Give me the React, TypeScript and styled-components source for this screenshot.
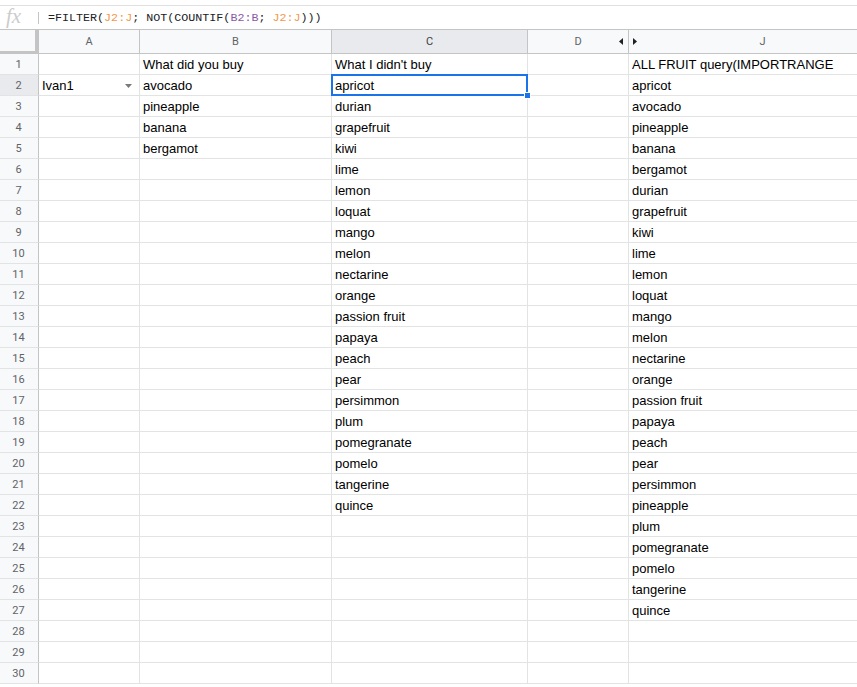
import React from "react";
import styled, { createGlobalStyle } from "styled-components";

const GlobalStyle = createGlobalStyle`
  html, body {
    margin: 0;
    padding: 0;
    background: #ffffff;
    overflow: hidden;
  }
  * {
    box-sizing: border-box;
  }
`;

const COLS = "39px 101px 192px 196px 101px 268px";

const colA: Record<number, string> = { 2: "Ivan1" };
const colB = ["What did you buy", "avocado", "pineapple", "banana", "bergamot"];
const colC = [
  "What I didn't buy", "apricot", "durian", "grapefruit", "kiwi", "lime", "lemon",
  "loquat", "mango", "melon", "nectarine", "orange", "passion fruit", "papaya",
  "peach", "pear", "persimmon", "plum", "pomegranate", "pomelo", "tangerine", "quince",
];
const colJ = [
  "ALL FRUIT query(IMPORTRANGE", "apricot", "avocado", "pineapple", "banana", "bergamot",
  "durian", "grapefruit", "kiwi", "lime", "lemon", "loquat", "mango", "melon",
  "nectarine", "orange", "passion fruit", "papaya", "peach", "pear", "persimmon",
  "pineapple", "plum", "pomegranate", "pomelo", "tangerine", "quince",
];

const ROW_COUNT = 30;

export default function App() {
  const rows = Array.from({ length: ROW_COUNT }, (_, i) => i + 1);

  return (
    <>
      <GlobalStyle />
      <Page>
        <FormulaBar>
          <FxLabel>fx</FxLabel>
          <Divider />
          <FormulaText>
            =FILTER(<Ref $color="#f19a4d">J2:J</Ref>; NOT(COUNTIF(
            <Ref $color="#8a5aa6">B2:B</Ref>; <Ref $color="#f19a4d">J2:J</Ref>)))
          </FormulaText>
        </FormulaBar>

        <Sheet>
          <HeaderRow>
            <Corner />
            <ColHeader>A</ColHeader>
            <ColHeader>B</ColHeader>
            <ColHeader $selected>C</ColHeader>
            <ColHeader>
              D
              <HiddenArrow $side="left">
                <svg width="4" height="7" viewBox="0 0 4 7">
                  <path d="M4 0 L0 3.5 L4 7 Z" fill="#202124" />
                </svg>
              </HiddenArrow>
            </ColHeader>
            <ColHeader>
              <HiddenArrow $side="right">
                <svg width="4" height="7" viewBox="0 0 4 7">
                  <path d="M0 0 L4 3.5 L0 7 Z" fill="#202124" />
                </svg>
              </HiddenArrow>
              J
            </ColHeader>
          </HeaderRow>

          {rows.map((r) => (
            <Row key={r}>
              <RowHeader $selected={r === 2}>{r}</RowHeader>
              <Cell>
                {colA[r]}
                {r === 2 && (
                  <DropArrow>
                    <svg width="7" height="4" viewBox="0 0 7 4">
                      <path d="M0 0 L7 0 L3.5 4 Z" fill="#7a7a7a" />
                    </svg>
                  </DropArrow>
                )}
              </Cell>
              <Cell>{colB[r - 1]}</Cell>
              <Cell>
                {colC[r - 1]}
                {r === 2 && (
                  <Selection>
                    <FillHandle />
                  </Selection>
                )}
              </Cell>
              <Cell />
              <Cell>{colJ[r - 1]}</Cell>
            </Row>
          ))}
        </Sheet>
      </Page>
    </>
  );
}

const Page = styled.div`
  width: 857px;
  height: 687px;
  overflow: hidden;
  background: #ffffff;
  font-family: "Liberation Sans", Arial, sans-serif;
`;

const FormulaBar = styled.div`
  margin-top: 5px;
  height: 25px;
  border-top: 1px solid #e0e0e0;
  border-bottom: 1px solid #c4c4c4;
  display: flex;
  align-items: center;
`;

const FxLabel = styled.span`
  width: 38px;
  padding-left: 6px;
  font-family: "Liberation Serif", "Times New Roman", serif;
  font-style: italic;
  font-size: 21px;
  color: #cccccc;
  line-height: 1;
  margin-top: -3px;
`;

const Divider = styled.div`
  width: 1px;
  height: 12px;
  background: #c4c4c4;
`;

const FormulaText = styled.div`
  padding-left: 9px;
  font-family: "Liberation Mono", "Courier New", monospace;
  font-size: 11.7px;
  color: #202124;
  white-space: pre;
`;

const Ref = styled.span<{ $color: string }>`
  color: ${(p) => p.$color};
`;

const Sheet = styled.div`
  display: flex;
  flex-direction: column;
`;

const HeaderRow = styled.div`
  display: grid;
  grid-template-columns: ${COLS};
  height: 24px;
  border-bottom: 1px solid #c4c4c4;
  background: #f8f9fa;
`;

const Corner = styled.div`
  background: #f8f9fa;
  border-right: 4px solid #c4c4c4;
  border-bottom: 3px solid #c4c4c4;
  margin-bottom: -1px;
`;

const ColHeader = styled.div<{ $selected?: boolean }>`
  position: relative;
  display: flex;
  align-items: center;
  justify-content: center;
  border-right: 1px solid #c4c4c4;
  background: ${(p) => (p.$selected ? "#e8eaed" : "#f8f9fa")};
  color: ${(p) => (p.$selected ? "#3c4043" : "#5f6368")};
  font-family: Roboto, "Liberation Sans", Arial, sans-serif;
  font-size: 11px;
`;

const HiddenArrow = styled.span<{ $side: "left" | "right" }>`
  position: absolute;
  top: 8px;
  display: flex;
  ${(p) => (p.$side === "left" ? "right: 5px;" : "left: 4px;")}
`;

const Row = styled.div`
  display: grid;
  grid-template-columns: ${COLS};
  height: 21px;
`;

const RowHeader = styled.div<{ $selected?: boolean }>`
  display: flex;
  align-items: center;
  justify-content: center;
  background: ${(p) => (p.$selected ? "#e8eaed" : "#f8f9fa")};
  border-right: 1px solid #c4c4c4;
  border-bottom: 1px solid #e2e3e3;
  color: #5f6368;
  font-family: Roboto, "Liberation Sans", Arial, sans-serif;
  font-size: 11px;
  padding-right: 1px;
`;

const Cell = styled.div`
  position: relative;
  display: flex;
  align-items: center;
  padding: 1px 3px 0;
  border-right: 1px solid #e2e3e3;
  border-bottom: 1px solid #e2e3e3;
  font-size: 13px;
  color: #000000;
  white-space: nowrap;
  overflow: visible;
`;

const DropArrow = styled.span`
  position: absolute;
  right: 7px;
  top: 9px;
  display: flex;
`;

const Selection = styled.div`
  position: absolute;
  z-index: 2;
  left: -1px;
  top: -1px;
  right: -1px;
  bottom: -1px;
  border: 2px solid #1a73e8;
  pointer-events: none;
`;

const FillHandle = styled.div`
  position: absolute;
  right: -5px;
  bottom: -5px;
  width: 7px;
  height: 7px;
  background: #1a73e8;
  border: 1px solid #ffffff;
`;
